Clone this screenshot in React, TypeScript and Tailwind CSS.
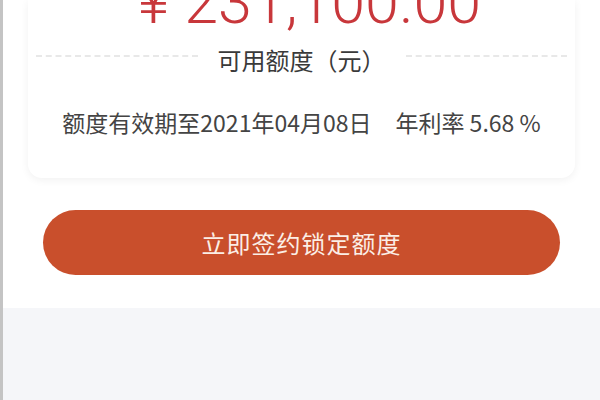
import React from "react";

export default function App() {
  const cjk = { fontFamily: '"Noto Sans CJK SC", "Noto Sans", sans-serif' };
  return (
    <div className="w-[600px] h-[400px] overflow-hidden flex bg-white" style={cjk}>
      <div className="w-[3px] shrink-0 bg-[#c4c4c4]" />
      <div className="flex-1 flex flex-col">
        <div className="bg-white flex flex-col">
          <div className="mx-[25px] rounded-b-[14px] bg-white shadow-[0_2px_8px_rgba(0,0,0,0.06)] overflow-hidden pb-[41px]">
            <div
              className="mt-[-28px] h-[61px] pl-[16px] text-center text-[61px] leading-[61px] text-[#c8373b] whitespace-nowrap"
              style={{ fontFamily: '"Roboto", "Noto Sans", sans-serif', fontWeight: 300 }}
            >
              ¥ 231,100.00
            </div>
            <div className="mt-[15px] flex items-center h-[24px] px-[8px] gap-[20px]">
              <div className="flex-1 border-t-2 border-dashed border-[#e8e8e8] mb-[8px]" />
              <div className="text-[24px] leading-[24px] text-[#3a3a3a] whitespace-nowrap">可用额度（元）</div>
              <div className="flex-1 border-t-2 border-dashed border-[#e8e8e8] mb-[8px]" />
            </div>
            <div className="mt-[35px] text-center text-[23px] text-[#444] whitespace-nowrap leading-[30px]">
              额度有效期至2021年04月08日<span className="inline-block w-[24px]" />年利率 5.68 %
            </div>
          </div>
          <div className="pt-[32px] pb-[33px] px-[40px]">
            <div className="h-[65px] rounded-full bg-[#c94f2c] flex items-center justify-center text-[24px] tracking-[1px] text-[#fbeee6]">
              立即签约锁定额度
            </div>
          </div>
        </div>
        <div className="flex-1 bg-[#f5f6f9]" />
      </div>
    </div>
  );
}
